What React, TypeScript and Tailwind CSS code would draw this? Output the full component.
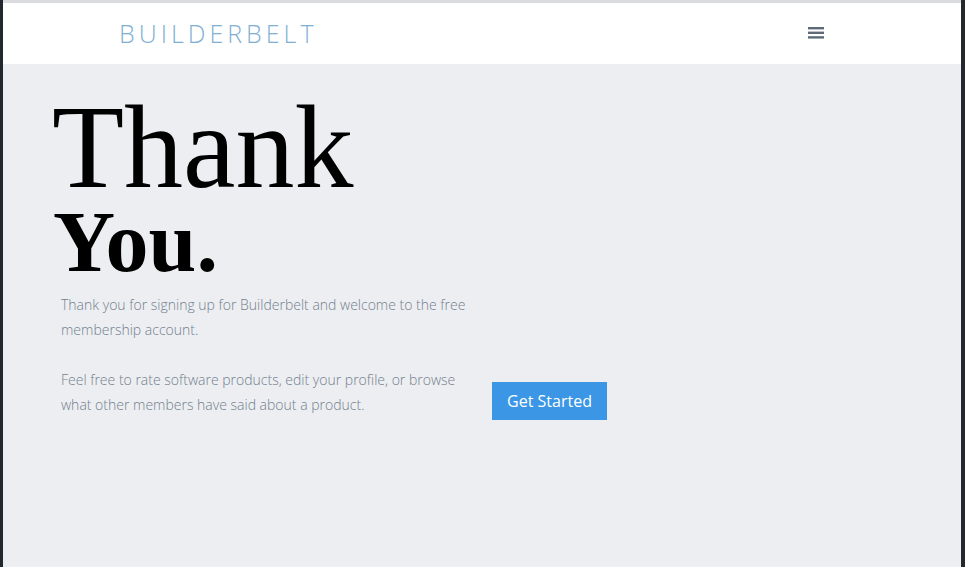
const App = () => {
  return (
    <div className="h-[567px] w-[965px] overflow-hidden bg-[#23282e] pl-[3px] pr-[4px]">
      <div className="flex h-full flex-col bg-[#eceef2]">
        {/* top edge */}
        <div className="h-[3px] bg-[#d9dbde]" />
        {/* Header */}
        <header className="flex h-[61px] items-center justify-between bg-white pl-[116px] pr-[137px]">
          <span
            className="text-[25px] font-light tracking-[4px] text-[#7fb0d3]"
            style={{ fontFamily: '"Open Sans", sans-serif' }}
          >
            BUILDERBELT
          </span>
          <svg width="16" height="12" viewBox="0 0 16 12" className="mt-[-2px]">
            <rect x="0" y="0" width="16" height="2.4" fill="#5d6a78" />
            <rect x="0" y="4.6" width="16" height="2.4" fill="#5d6a78" />
            <rect x="0" y="9.2" width="16" height="2.4" fill="#5d6a78" />
          </svg>
        </header>

        {/* Content */}
        <main className="flex flex-col pl-[49px] pt-[31px]">
          <h1
            className="text-[118px] font-normal leading-[106px] text-black"
            style={{ fontFamily: '"Liberation Serif", serif' }}
          >
            Thank
          </h1>
          <h2
            className="ml-[1px] mt-[6px] text-[86px] font-bold leading-[70px] text-black"
            style={{ fontFamily: '"Liberation Serif", serif' }}
          >
            You.
          </h2>
          <div className="mt-[15px] flex items-end gap-[21px] pl-[9px]">
            <div
              className="w-[410px] text-[14px] font-light leading-[25px] text-[#737f8d]"
              style={{ fontFamily: '"Open Sans", sans-serif' }}
            >
              <p>
                Thank you for signing up for Builderbelt and welcome to the free
                membership account.
              </p>
              <p className="mt-[25px]">
                Feel free to rate software products, edit your profile, or
                browse what other members have said about a product.
              </p>
            </div>
            <button
              className="mb-[-3px] h-[38px] w-[115px] bg-[#3b96e6] text-[16px] text-white"
              style={{ fontFamily: '"Open Sans", sans-serif' }}
            >
              Get Started
            </button>
          </div>
        </main>
      </div>
    </div>
  );
};

export default App;
